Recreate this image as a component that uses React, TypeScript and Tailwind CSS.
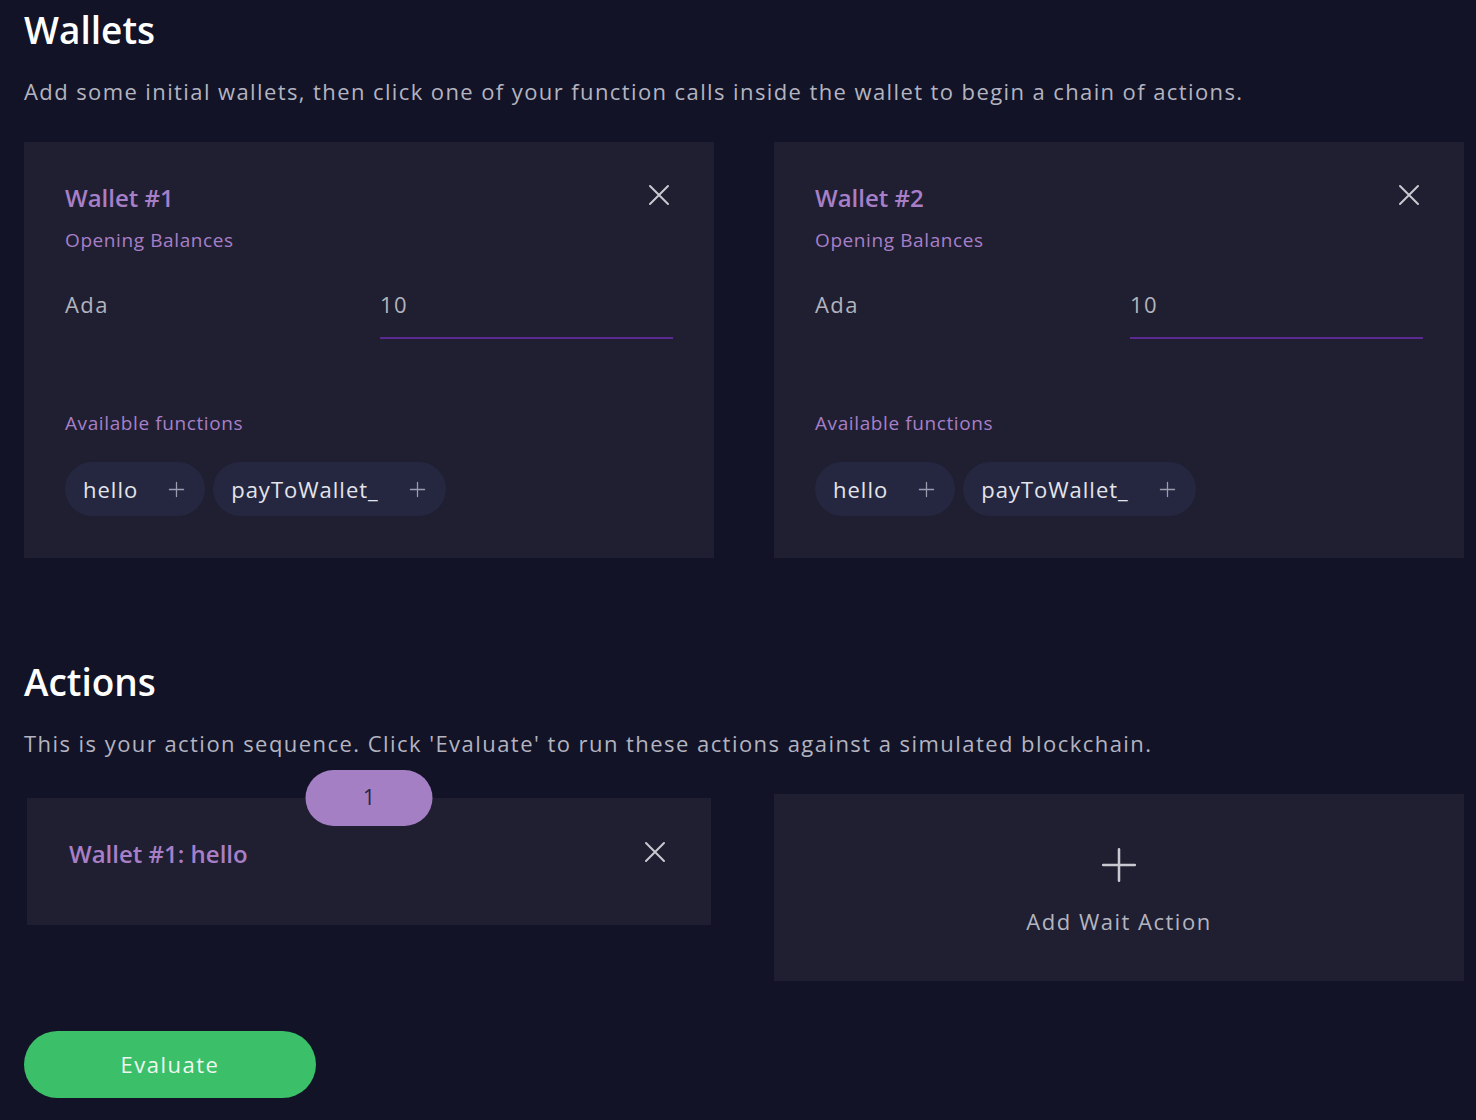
import React from 'react';

const font = { fontFamily: '"Open Sans", "Noto Sans", sans-serif' };

const CloseIcon: React.FC = () => (
  <svg width="22" height="22" viewBox="0 0 22 22" fill="none" stroke="#c9c9d2" strokeWidth="2" strokeLinecap="round">
    <path d="M2 2L20 20M20 2L2 20" />
  </svg>
);

const PlusIcon: React.FC<{ size: number; stroke?: number }> = ({ size, stroke = 2 }) => (
  <svg width={size} height={size} viewBox="0 0 24 24" fill="none" stroke="currentColor" strokeWidth={stroke} strokeLinecap="round">
    <path d="M12 2v20M2 12h20" />
  </svg>
);

const FnChip: React.FC<{ name: string }> = ({ name }) => (
  <button className="flex items-center h-[54px] rounded-full bg-[#252741] pl-[18px] pr-[20px] gap-[30px]">
    <span className="text-[22px] tracking-[1px] text-[#e4e4ea]">{name}</span>
    <span className="text-[#9c9cb0]">
      <PlusIcon size={17} stroke={1.8} />
    </span>
  </button>
);

const WalletCard: React.FC<{ n: number }> = ({ n }) => (
  <div className="bg-[#1f1f31] pt-[40px] pb-[42px] px-[41px]">
    <div className="flex items-start justify-between">
      <div className="text-[24px] leading-[32px] font-semibold text-[#a87fc7]">Wallet #{n}</div>
      <div className="mt-[2px] mr-[3px]">
        <CloseIcon />
      </div>
    </div>
    <div className="mt-[12px] text-[19px] leading-[28px] tracking-[0.6px] text-[#a87fc7]">Opening Balances</div>
    <div className="mt-[35px] grid grid-cols-[315px_1fr] items-start">
      <div className="text-[22px] leading-[30px] tracking-[1.4px] text-[#b3b3bd]">Ada</div>
      <div className="border-b-2 border-[#5a2a91] pb-[18px]">
        <span className="text-[22px] leading-[30px] tracking-[1.4px] text-[#b3b3bd]">10</span>
      </div>
    </div>
    <div className="mt-[70px] text-[19px] leading-[28px] tracking-[0.6px] text-[#a87fc7]">Available functions</div>
    <div className="mt-[25px] flex gap-[8px]">
      <FnChip name="hello" />
      <FnChip name="payToWallet_" />
    </div>
  </div>
);

const App: React.FC = () => {
  return (
    <div className="min-h-[1120px] w-full bg-[#121326] pl-6 pr-3" style={font}>
      <h1 className="pt-[7px] text-[37px] leading-[46px] font-semibold text-white">Wallets</h1>
      <p className="mt-[23px] text-[22px] leading-[30px] tracking-[1.4px] text-[#b4b4c0]">
        Add some initial wallets, then click one of your function calls inside the wallet to begin a chain of actions.
      </p>
      <div className="mt-[36px] grid grid-cols-2 gap-[60px]">
        <WalletCard n={1} />
        <WalletCard n={2} />
      </div>

      <h1 className="mt-[101px] text-[37px] leading-[46px] font-semibold text-white">Actions</h1>
      <p className="mt-[23px] text-[22px] leading-[30px] tracking-[1.45px] text-[#b4b4c0]">
        This is your action sequence. Click 'Evaluate' to run these actions against a simulated blockchain.
      </p>
      <div className="mt-[36px] grid grid-cols-2 gap-[60px] items-start">
        <div className="px-[3px] pt-[4px]">
          <div className="relative h-[127px] bg-[#1f1f31] pl-[42px] pr-[45px] pt-[40px]">
            <div className="absolute left-1/2 top-[-28px] -translate-x-1/2 flex h-[56px] w-[127px] items-center justify-center rounded-full bg-[#a47fc3] text-[21px] text-[#2a2340]">
              1
            </div>
            <div className="flex items-start justify-between">
              <div className="text-[24px] leading-[32px] font-semibold text-[#a87fc7]">Wallet #1: hello</div>
              <div className="mt-[3px]">
                <CloseIcon />
              </div>
            </div>
          </div>
        </div>
        <button className="flex h-[187px] flex-col items-center justify-start pt-[52px] bg-[#1f1f31]">
          <span className="text-[#c9c9d2]">
            <PlusIcon size={38} stroke={1.6} />
          </span>
          <span className="mt-[22px] text-[22px] leading-[30px] tracking-[1.5px] text-[#b4b4c0]">Add Wait Action</span>
        </button>
      </div>

      <button className="mt-[50px] flex h-[67px] w-[292px] items-center justify-center rounded-full bg-[#3bbf69] text-[22px] tracking-[1.5px] text-[#eef8f0]">
        Evaluate
      </button>
    </div>
  );
};

export default App;
